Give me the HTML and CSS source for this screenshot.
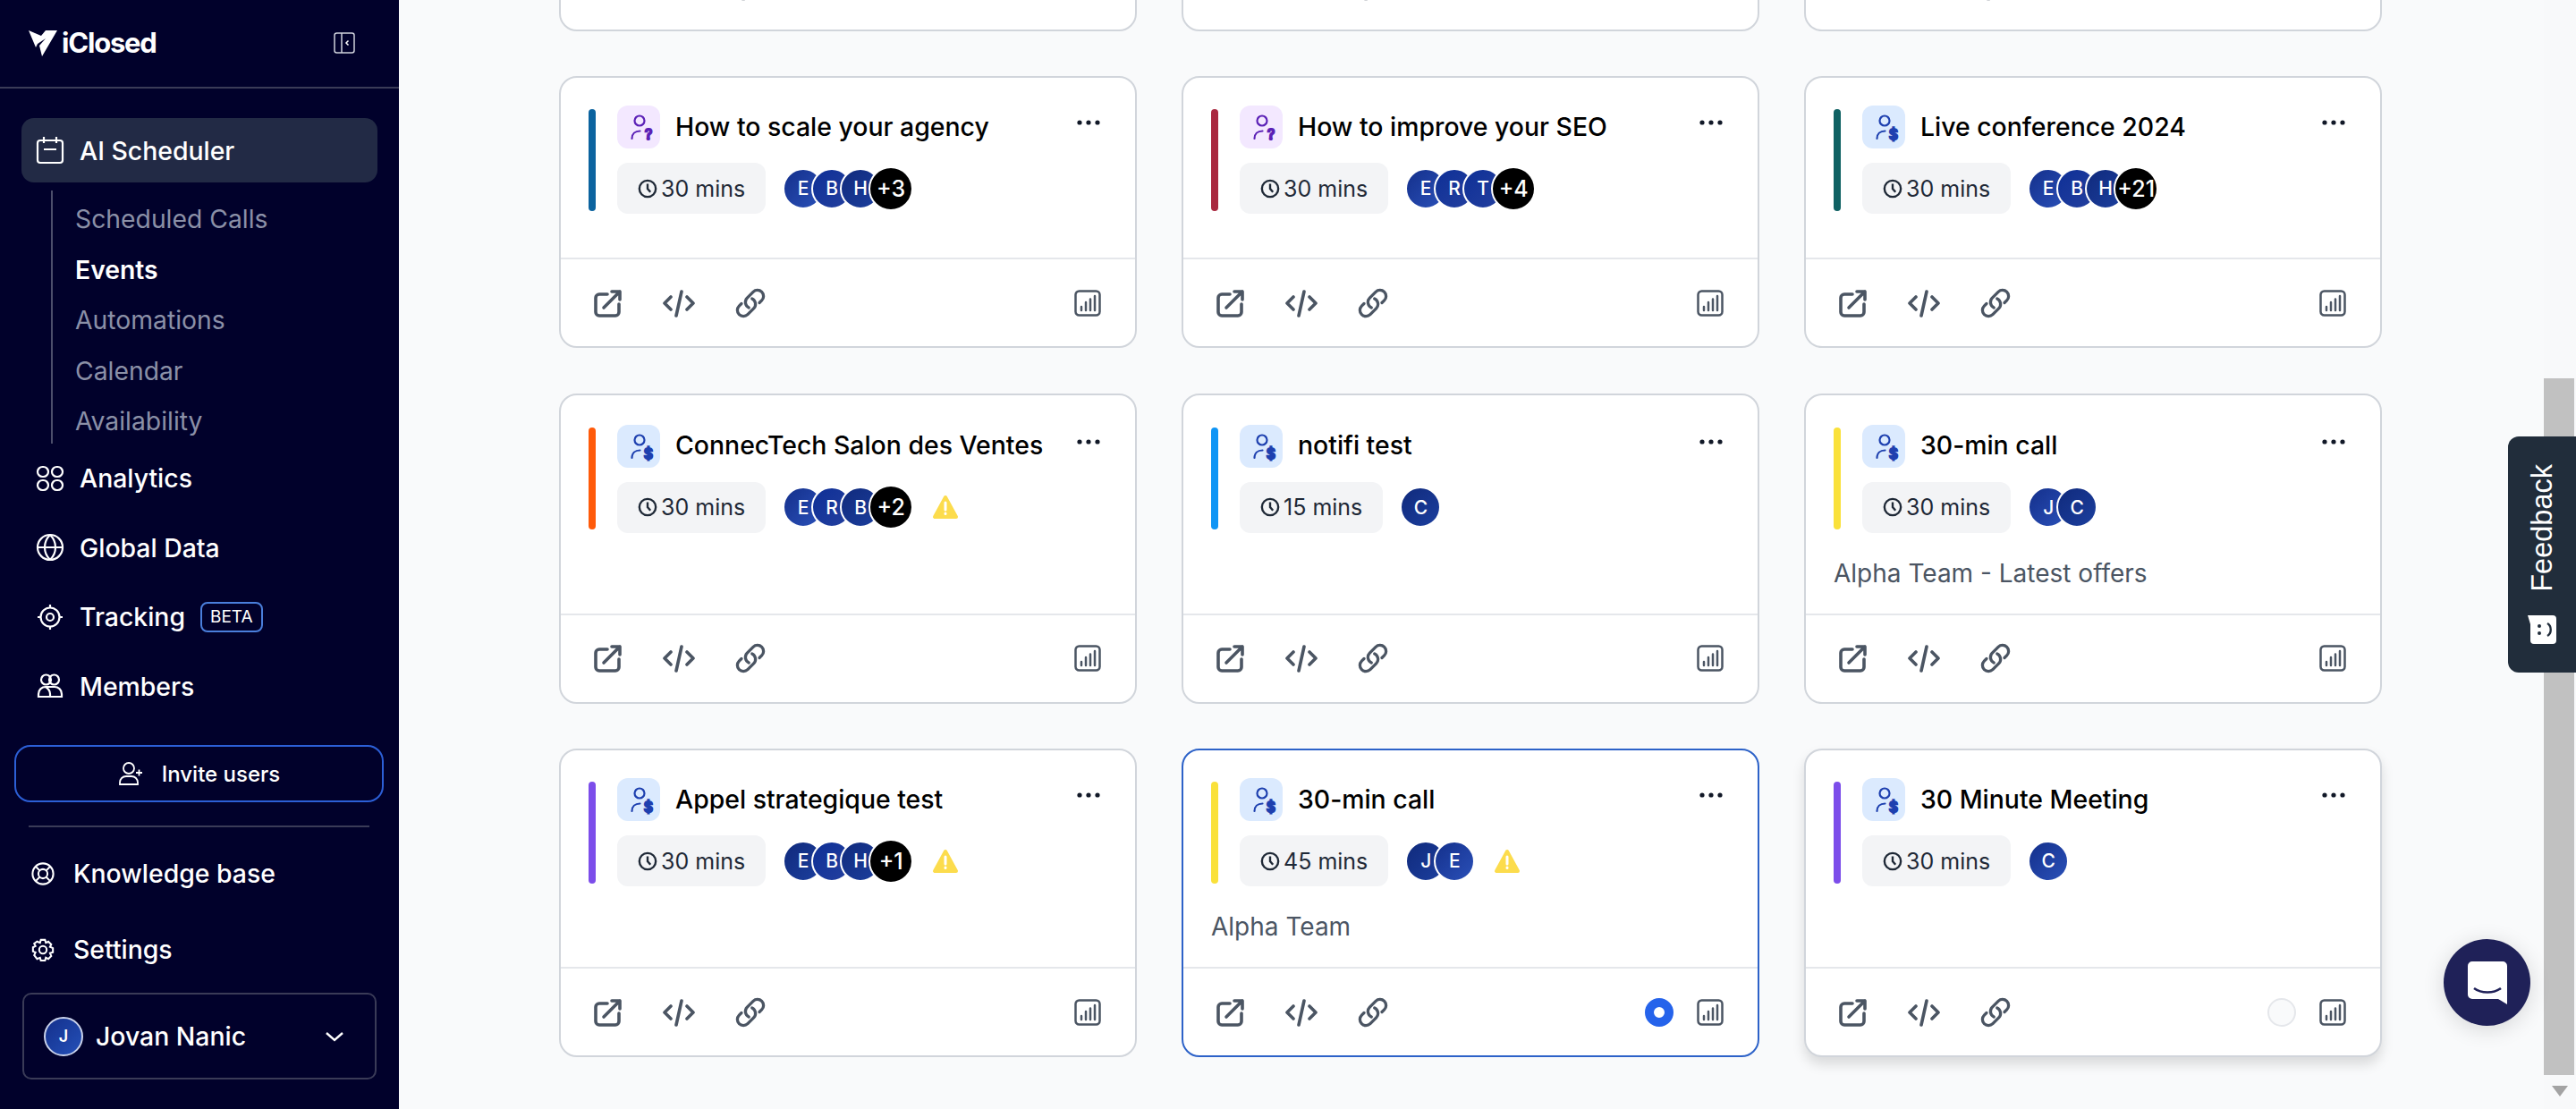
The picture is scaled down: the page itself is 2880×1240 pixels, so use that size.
FILE: index.html
```html
<!DOCTYPE html>
<html lang="en">
<head>
    <meta charset="UTF-8">
    <title>iClosed - Events</title>
    <link rel="stylesheet" href="styles.css">
</head>
<body>
<!-- Icon sprite -->
<svg class="sprite" xmlns="http://www.w3.org/2000/svg">
    <symbol id="i-external" viewBox="0 0 32 32"><path d="M15 6H6a4 4 0 0 0-4 4v16a4 4 0 0 0 4 4h18a4 4 0 0 0 4-4v-9M11 21 29 3M20 3h9v9"/></symbol>
    <symbol id="i-code" viewBox="0 0 38 32"><path d="M10 9 3 16l7 7M28 9l7 7-7 7M22 3l-6 27"/></symbol>
    <symbol id="i-link" viewBox="0 0 24 24"><path d="M13.190 8.688a4.500 4.500 0 0 1 1.242 7.244l-4.500 4.500a4.500 4.500 0 0 1-6.364-6.364l1.757-1.757m13.350-.622 1.757-1.757a4.500 4.500 0 0 0-6.364-6.364l-4.500 4.500a4.500 4.500 0 0 0 1.242 7.244"/></symbol>
    <symbol id="i-chart" viewBox="0 0 30 30"><rect x="1.500" y="1.500" width="27" height="27" rx="4"/><path d="M8 23v-4M13 23v-9M18 23V10.500M23 23V7"/></symbol>
    <symbol id="i-clock" viewBox="0 0 24 24"><circle cx="12" cy="12" r="10"/><path d="M12 6v6l3.500 4"/></symbol>
    <symbol id="i-warn" viewBox="0 0 30 28"><path class="warn-fill" d="M15 3 3 25h24z"/><path class="warn-mark" d="M15 9v8M15 21v.5"/></symbol>
    <symbol id="i-dots" viewBox="0 0 26 6"><circle cx="3" cy="3" r="2.600"/><circle cx="13" cy="3" r="2.600"/><circle cx="23" cy="3" r="2.600"/></symbol>
    <symbol id="i-buyer" viewBox="0 0 48 48"><circle cx="25" cy="17" r="5.500"/><path d="M16.500 37c0-5 3.500-8.500 9-8.500"/><text x="35" y="37.500" text-anchor="middle">$</text></symbol>
    <symbol id="i-lead" viewBox="0 0 48 48"><circle cx="25" cy="17" r="5.500"/><path d="M16.500 37c0-5 3.500-8.500 9-8.500"/><text x="35" y="38" text-anchor="middle">?</text></symbol>
</svg>

<aside class="sidebar">
    <div class="brand">
        <div class="logo">
            <svg width="33" height="30" viewBox="0 0 33 30"><path fill="#fff" d="M0 1 14 7 19 1h13L15 30l-3-12 7-8-9 6-2 4z"/></svg>
            <span>iClosed</span>
        </div>
        <svg class="collapse" width="24" height="24" viewBox="0 0 24 24" fill="none" stroke="#cfd2dc" stroke-width="1.500"><rect x="1" y="1" width="22" height="22" rx="2.500"/><path d="M9 1v22"/><path stroke="#fff" d="M16.500 9.500 14 12l2.500 2.500"/></svg>
    </div>

    <a class="nav-item active">
        <svg viewBox="0 0 32 32"><rect x="2" y="5" width="28" height="25" rx="3"/><path d="M9 1v7M23 1v7M9 15h14"/></svg>
        AI Scheduler
    </a>
    <ul class="subnav">
        <li>Scheduled Calls</li>
        <li class="current">Events</li>
        <li>Automations</li>
        <li>Calendar</li>
        <li>Availability</li>
    </ul>
    <a class="nav-item">
        <svg viewBox="0 0 32 32"><rect x="2" y="3" width="12" height="11" rx="5.500"/><rect x="18" y="3" width="12" height="11" rx="5.500"/><rect x="2" y="18" width="12" height="11" rx="5.500"/><rect x="18" y="18" width="12" height="11" rx="5.500"/></svg>
        Analytics
    </a>
    <a class="nav-item">
        <svg viewBox="0 0 32 32"><circle cx="16" cy="16" r="14"/><path d="M2 16h28M16 2c-8 8-8 20 0 28M16 2c8 8 8 20 0 28"/></svg>
        Global Data
    </a>
    <a class="nav-item">
        <svg viewBox="0 0 32 32"><circle cx="16" cy="16" r="10.500"/><circle cx="16" cy="16" r="4"/><path d="M16 2v3.500M16 26.500V30M2 16h3.500M26.500 16H30"/></svg>
        Tracking
        <span class="badge">BETA</span>
    </a>
    <a class="nav-item">
        <svg viewBox="0 0 32 32"><circle cx="11.500" cy="9" r="5.500"/><circle cx="20.500" cy="9" r="5.500"/><path d="M3 28v-3c0-5 4-8 8-8h10c4 0 8 3 8 8v3zM16 28v-3c0-3-2-6-5-8"/></svg>
        Members
    </a>

    <button class="invite">
        <svg width="28" height="28" viewBox="0 0 28 28" fill="none" stroke="#fff" stroke-width="1.800"><circle cx="12" cy="8" r="6"/><path d="M2 26v-2c0-4 3-7 7-7h6c4 0 7 3 7 7v2zM20 13h7M23.500 9.500v7"/></svg>
        Invite users
    </button>
    <div class="side-divider"></div>

    <a class="nav-item nav-low">
        <svg viewBox="0 0 28 28"><circle cx="14" cy="14" r="12.500"/><circle cx="14" cy="14" r="5.500"/><path d="m5 5 5.500 5.500M23 5l-5.500 5.500M5 23l5.500-5.500M23 23l-5.500-5.500"/></svg>
        Knowledge base
    </a>
    <a class="nav-item nav-low">
        <svg viewBox="0 0 28 28"><circle cx="14" cy="14" r="4.500"/><path d="M11.500 2h5l1 3.500 3-1.500 3.500 3.500-1.500 3 3.500 1.500v5l-3.500 1 1.500 3.500-3.500 3.500-3-1.500-1 3.500h-5l-1-3.500-3.500 1.500L3.500 20.500l1.500-3.500L2 16v-5l3-1.500-1.500-3L7 4l3.500 1.500z"/></svg>
        Settings
    </a>

    <div class="profile">
        <span class="avatar-me">J</span>
        <span class="profile-name">Jovan Nanic</span>
        <svg width="22" height="12" viewBox="0 0 22 12" fill="none" stroke="#fff" stroke-width="2.400"><path d="m2 2 9 8 9-8"/></svg>
    </div>
</aside>

<main class="content">
    <div class="grid">
        <!-- Row cut off by the scroll position -->
        <section class="card">
            <div class="card-foot">
                <svg class="ic ic-external"><use href="#i-external"/></svg>
                <svg class="ic ic-code"><use href="#i-code"/></svg>
                <svg class="ic ic-link"><use href="#i-link"/></svg>
                <div class="foot-right"><svg class="ic ic-chart"><use href="#i-chart"/></svg></div>
            </div>
        </section>
        <section class="card">
            <div class="card-foot">
                <svg class="ic ic-external"><use href="#i-external"/></svg>
                <svg class="ic ic-code"><use href="#i-code"/></svg>
                <svg class="ic ic-link"><use href="#i-link"/></svg>
                <div class="foot-right"><svg class="ic ic-chart"><use href="#i-chart"/></svg></div>
            </div>
        </section>
        <section class="card">
            <div class="card-foot">
                <svg class="ic ic-external"><use href="#i-external"/></svg>
                <svg class="ic ic-code"><use href="#i-code"/></svg>
                <svg class="ic ic-link"><use href="#i-link"/></svg>
                <div class="foot-right"><svg class="ic ic-chart"><use href="#i-chart"/></svg></div>
            </div>
        </section>

        <section class="card">
            <div class="card-body">
                <div class="head">
                    <span class="bar bar-ocean"></span>
                    <div class="head-main">
                        <div class="title-row">
                            <svg class="type type-lead"><use href="#i-lead"/></svg>
                            <h3>How to scale your agency</h3>
                            <svg class="dots"><use href="#i-dots"/></svg>
                        </div>
                        <div class="meta">
                            <span class="chip"><svg class="clock"><use href="#i-clock"/></svg>30 mins</span>
                            <div class="avatars"><span class="av av-a">E</span><span class="av av-b">B</span><span class="av av-c">H</span><span class="av av-more">+3</span></div>
                        </div>
                    </div>
                </div>
            </div>
            <div class="card-foot">
                <svg class="ic ic-external"><use href="#i-external"/></svg>
                <svg class="ic ic-code"><use href="#i-code"/></svg>
                <svg class="ic ic-link"><use href="#i-link"/></svg>
                <div class="foot-right"><svg class="ic ic-chart"><use href="#i-chart"/></svg></div>
            </div>
        </section>
        <section class="card">
            <div class="card-body">
                <div class="head">
                    <span class="bar bar-crimson"></span>
                    <div class="head-main">
                        <div class="title-row">
                            <svg class="type type-lead"><use href="#i-lead"/></svg>
                            <h3>How to improve your SEO</h3>
                            <svg class="dots"><use href="#i-dots"/></svg>
                        </div>
                        <div class="meta">
                            <span class="chip"><svg class="clock"><use href="#i-clock"/></svg>30 mins</span>
                            <div class="avatars"><span class="av av-a">E</span><span class="av av-b">R</span><span class="av av-b">T</span><span class="av av-more">+4</span></div>
                        </div>
                    </div>
                </div>
            </div>
            <div class="card-foot">
                <svg class="ic ic-external"><use href="#i-external"/></svg>
                <svg class="ic ic-code"><use href="#i-code"/></svg>
                <svg class="ic ic-link"><use href="#i-link"/></svg>
                <div class="foot-right"><svg class="ic ic-chart"><use href="#i-chart"/></svg></div>
            </div>
        </section>
        <section class="card">
            <div class="card-body">
                <div class="head">
                    <span class="bar bar-teal"></span>
                    <div class="head-main">
                        <div class="title-row">
                            <svg class="type type-buyer"><use href="#i-buyer"/></svg>
                            <h3>Live conference 2024</h3>
                            <svg class="dots"><use href="#i-dots"/></svg>
                        </div>
                        <div class="meta">
                            <span class="chip"><svg class="clock"><use href="#i-clock"/></svg>30 mins</span>
                            <div class="avatars"><span class="av av-a">E</span><span class="av av-b">B</span><span class="av av-c">H</span><span class="av av-more">+21</span></div>
                        </div>
                    </div>
                </div>
            </div>
            <div class="card-foot">
                <svg class="ic ic-external"><use href="#i-external"/></svg>
                <svg class="ic ic-code"><use href="#i-code"/></svg>
                <svg class="ic ic-link"><use href="#i-link"/></svg>
                <div class="foot-right"><svg class="ic ic-chart"><use href="#i-chart"/></svg></div>
            </div>
        </section>

        <section class="card card-mid">
            <div class="card-body">
                <div class="head">
                    <span class="bar bar-orange"></span>
                    <div class="head-main">
                        <div class="title-row">
                            <svg class="type type-buyer"><use href="#i-buyer"/></svg>
                            <h3>ConnecTech Salon des Ventes</h3>
                            <svg class="dots"><use href="#i-dots"/></svg>
                        </div>
                        <div class="meta">
                            <span class="chip"><svg class="clock"><use href="#i-clock"/></svg>30 mins</span>
                            <div class="avatars"><span class="av av-a">E</span><span class="av av-b">R</span><span class="av av-c">B</span><span class="av av-more">+2</span></div>
                            <svg class="warn"><use href="#i-warn"/></svg>
                        </div>
                    </div>
                </div>
            </div>
            <div class="card-foot">
                <svg class="ic ic-external"><use href="#i-external"/></svg>
                <svg class="ic ic-code"><use href="#i-code"/></svg>
                <svg class="ic ic-link"><use href="#i-link"/></svg>
                <div class="foot-right"><svg class="ic ic-chart"><use href="#i-chart"/></svg></div>
            </div>
        </section>
        <section class="card card-mid">
            <div class="card-body">
                <div class="head">
                    <span class="bar bar-sky"></span>
                    <div class="head-main">
                        <div class="title-row">
                            <svg class="type type-buyer"><use href="#i-buyer"/></svg>
                            <h3>notifi test</h3>
                            <svg class="dots"><use href="#i-dots"/></svg>
                        </div>
                        <div class="meta">
                            <span class="chip"><svg class="clock"><use href="#i-clock"/></svg>15 mins</span>
                            <div class="avatars"><span class="av av-c">C</span></div>
                        </div>
                    </div>
                </div>
            </div>
            <div class="card-foot">
                <svg class="ic ic-external"><use href="#i-external"/></svg>
                <svg class="ic ic-code"><use href="#i-code"/></svg>
                <svg class="ic ic-link"><use href="#i-link"/></svg>
                <div class="foot-right"><svg class="ic ic-chart"><use href="#i-chart"/></svg></div>
            </div>
        </section>
        <section class="card card-mid">
            <div class="card-body">
                <div class="head">
                    <span class="bar bar-yellow"></span>
                    <div class="head-main">
                        <div class="title-row">
                            <svg class="type type-buyer"><use href="#i-buyer"/></svg>
                            <h3>30-min call</h3>
                            <svg class="dots"><use href="#i-dots"/></svg>
                        </div>
                        <div class="meta">
                            <span class="chip"><svg class="clock"><use href="#i-clock"/></svg>30 mins</span>
                            <div class="avatars"><span class="av av-a">J</span><span class="av av-c">C</span></div>
                        </div>
                    </div>
                </div>
                <p class="desc">Alpha Team - Latest offers</p>
            </div>
            <div class="card-foot">
                <svg class="ic ic-external"><use href="#i-external"/></svg>
                <svg class="ic ic-code"><use href="#i-code"/></svg>
                <svg class="ic ic-link"><use href="#i-link"/></svg>
                <div class="foot-right"><svg class="ic ic-chart"><use href="#i-chart"/></svg></div>
            </div>
        </section>

        <section class="card">
            <div class="card-body">
                <div class="head">
                    <span class="bar bar-violet"></span>
                    <div class="head-main">
                        <div class="title-row">
                            <svg class="type type-buyer"><use href="#i-buyer"/></svg>
                            <h3>Appel strategique test</h3>
                            <svg class="dots"><use href="#i-dots"/></svg>
                        </div>
                        <div class="meta">
                            <span class="chip"><svg class="clock"><use href="#i-clock"/></svg>30 mins</span>
                            <div class="avatars"><span class="av av-c">E</span><span class="av av-b">B</span><span class="av av-c">H</span><span class="av av-more">+1</span></div>
                            <svg class="warn"><use href="#i-warn"/></svg>
                        </div>
                    </div>
                </div>
            </div>
            <div class="card-foot">
                <svg class="ic ic-external"><use href="#i-external"/></svg>
                <svg class="ic ic-code"><use href="#i-code"/></svg>
                <svg class="ic ic-link"><use href="#i-link"/></svg>
                <div class="foot-right"><svg class="ic ic-chart"><use href="#i-chart"/></svg></div>
            </div>
        </section>
        <section class="card card-selected">
            <div class="card-body">
                <div class="head">
                    <span class="bar bar-yellow"></span>
                    <div class="head-main">
                        <div class="title-row">
                            <svg class="type type-buyer"><use href="#i-buyer"/></svg>
                            <h3>30-min call</h3>
                            <svg class="dots"><use href="#i-dots"/></svg>
                        </div>
                        <div class="meta">
                            <span class="chip"><svg class="clock"><use href="#i-clock"/></svg>45 mins</span>
                            <div class="avatars"><span class="av av-c">J</span><span class="av av-a">E</span></div>
                            <svg class="warn"><use href="#i-warn"/></svg>
                        </div>
                    </div>
                </div>
                <p class="desc">Alpha Team</p>
            </div>
            <div class="card-foot">
                <svg class="ic ic-external"><use href="#i-external"/></svg>
                <svg class="ic ic-code"><use href="#i-code"/></svg>
                <svg class="ic ic-link"><use href="#i-link"/></svg>
                <div class="foot-right">
                    <span class="radio radio-on"></span>
                    <svg class="ic ic-chart"><use href="#i-chart"/></svg>
                </div>
            </div>
        </section>
        <section class="card card-hover">
            <div class="card-body">
                <div class="head">
                    <span class="bar bar-violet"></span>
                    <div class="head-main">
                        <div class="title-row">
                            <svg class="type type-buyer"><use href="#i-buyer"/></svg>
                            <h3>30 Minute Meeting</h3>
                            <svg class="dots"><use href="#i-dots"/></svg>
                        </div>
                        <div class="meta">
                            <span class="chip"><svg class="clock"><use href="#i-clock"/></svg>30 mins</span>
                            <div class="avatars"><span class="av av-a">C</span></div>
                        </div>
                    </div>
                </div>
            </div>
            <div class="card-foot">
                <svg class="ic ic-external"><use href="#i-external"/></svg>
                <svg class="ic ic-code"><use href="#i-code"/></svg>
                <svg class="ic ic-link"><use href="#i-link"/></svg>
                <div class="foot-right">
                    <span class="radio"></span>
                    <svg class="ic ic-chart"><use href="#i-chart"/></svg>
                </div>
            </div>
        </section>
    </div>
</main>

<div class="scrollbar">
    <div class="scroll-thumb"></div>
    <div class="scroll-down"></div>
</div>

<!-- Floating widgets -->
<div class="feedback">
    <span class="feedback-text">Feedback</span>
    <svg width="33" height="32" viewBox="0 0 33 32"><path fill="#fff" d="M0 0h28a4 4 0 0 1 4 4v24a4 4 0 0 1-4 4H7a4 4 0 0 1-4-4V10z"/><circle cx="13" cy="12" r="2" fill="#212d3b"/><circle cx="13" cy="20" r="2" fill="#212d3b"/><path d="M22 9c5 3 5 11 0 14" fill="none" stroke="#212d3b" stroke-width="2.400"/></svg>
</div>
<div class="chat">
    <svg width="44" height="48" viewBox="0 0 44 48"><path fill="#fff" d="M5 0h34a5 5 0 0 1 5 5v43l-10-6H5a5 5 0 0 1-5-5V5a5 5 0 0 1 5-5z"/><path d="M7 30c8 6 22 6 30 0" fill="none" stroke="#1f2158" stroke-width="2.500"/></svg>
</div>
</body>
</html>
```
FILE: styles.css
```css
* {
    box-sizing: border-box;
}

body {
    margin: 0;
    height: 1240px;
    display: flex;
    overflow: hidden;
    background-color: #f9fafb;
    font-family: Inter, "Liberation Sans", sans-serif;
    color: #000;
}

.sprite {
    display: none;
}

/* Sidebar */
.sidebar {
    width: 446px;
    flex-shrink: 0;
    height: 100%;
    display: flex;
    flex-direction: column;
    background-color: #01012b;
    color: #fff;
}

.brand {
    height: 99px;
    flex-shrink: 0;
    display: flex;
    align-items: center;
    justify-content: space-between;
    padding: 0 49px 2px 32px;
    border-bottom: 2px solid #3a3b57;
}

.logo {
    display: flex;
    align-items: center;
    gap: 4px;
    font-size: 31px;
    font-weight: 700;
    letter-spacing: -1.200px;
}

.nav-item {
    height: 77.500px;
    flex-shrink: 0;
    margin: 0 24px;
    padding-left: 16px;
    display: flex;
    align-items: center;
    gap: 17px;
    font-size: 28.400px;
    font-weight: 500;
}

.nav-item svg {
    width: 32px;
    height: 32px;
    fill: none;
    stroke: #fff;
    stroke-width: 2.200;
}

.nav-item.active {
    height: 72px;
    margin-top: 33px;
    background-color: #222a45;
    border-radius: 14px;
}

.nav-low {
    height: 85px;
    margin: 0;
    padding-left: 35px;
    gap: 21px;
}

.nav-low svg {
    width: 26px;
    height: 26px;
}

.badge {
    padding: 0 9px;
    height: 34px;
    display: flex;
    align-items: center;
    border: 2px solid #4a7fdc;
    border-radius: 8px;
    font-size: 19px;
    font-weight: 400;
}

.subnav {
    list-style: none;
    height: 283px;
    flex-shrink: 0;
    margin: 9px 0 0 57px;
    padding: 4px 0 0 25px;
    border-left: 2px solid #4c4e6b;
    color: #8b90a7;
    font-size: 28.300px;
}

.subnav li {
    height: 56.500px;
    display: flex;
    align-items: center;
}

.subnav .current {
    color: #fff;
    font-weight: 600;
}

.invite {
    height: 64px;
    flex-shrink: 0;
    margin: 27px 17px 0 16px;
    display: flex;
    align-items: center;
    justify-content: center;
    gap: 21px;
    background: none;
    border: 2px solid #2c5fd6;
    border-radius: 18px;
    color: #fff;
    font-family: inherit;
    font-size: 24px;
    font-weight: 500;
}

.side-divider {
    height: 2px;
    flex-shrink: 0;
    margin: 26px 33px 9px 32px;
    background-color: #3a3b57;
}

.profile {
    height: 97px;
    flex-shrink: 0;
    margin: 6px 25px 0;
    padding: 0 34px 0 22px;
    display: flex;
    align-items: center;
    border: 2px solid #3a3b57;
    border-radius: 10px;
    font-size: 28.400px;
    font-weight: 500;
}

.avatar-me {
    width: 44px;
    height: 44px;
    display: flex;
    align-items: center;
    justify-content: center;
    background: linear-gradient(135deg, #14308c, #2450b8);
    border: 2px solid #c9d2ea;
    border-radius: 50%;
    font-size: 18px;
    font-weight: 600;
}

.profile-name {
    flex: 1;
    margin-left: 14px;
}

/* Event cards */
.content {
    flex: 1;
    min-width: 0;
    display: flex;
    flex-direction: column;
    justify-content: flex-end;
    padding: 0 0 58px 179px;
}

.grid {
    display: grid;
    grid-template-columns: repeat(3, 646px);
    column-gap: 50px;
    row-gap: 50.500px;
}

.card {
    display: flex;
    flex-direction: column;
    background-color: #fff;
    border: 2px solid #d1d5db;
    border-radius: 20px;
}

.card-selected {
    border-color: #2d62c8;
}

.card-hover {
    box-shadow: 0 8px 14px rgba(0, 0, 0, 0.13);
}

.card-body {
    flex: 1;
    min-height: 201px;
    padding: 31px 31px 26px;
}

.card-mid .card-body {
    padding-top: 33px;
}

.head {
    display: flex;
    align-items: center;
    gap: 24px;
}

.bar {
    width: 8px;
    height: 114px;
    flex-shrink: 0;
    border-radius: 4px;
}

.bar-ocean { background-color: #0b639f; }
.bar-crimson { background-color: #a9283f; }
.bar-teal { background-color: #0f6163; }
.bar-orange { background-color: #ff5a0a; }
.bar-sky { background-color: #0f95f5; }
.bar-yellow { background-color: #fae13a; }
.bar-violet { background-color: #7c4dea; }

.head-main {
    flex: 1;
    min-width: 0;
}

.title-row {
    display: flex;
    align-items: center;
    gap: 17px;
    height: 48px;
}

h3 {
    flex: 1;
    margin: 0;
    padding-bottom: 2px;
    font-size: 28.400px;
    font-weight: 500;
}

.type {
    width: 48px;
    height: 48px;
    flex-shrink: 0;
    border-radius: 12px;
    fill: none;
    stroke-width: 2.200;
    stroke-linecap: round;
}

.type text {
    stroke: none;
    font-family: Inter, sans-serif;
    font-size: 13px;
    font-weight: 600;
}

.type-lead {
    background-color: #f3e8ff;
    stroke: #5b21b6;
}

.type-lead text {
    fill: #5b21b6;
}

.type-buyer {
    background-color: #dbeafe;
    stroke: #1e40af;
}

.type-buyer text {
    fill: #1e40af;
}

.dots {
    width: 26px;
    height: 6px;
    margin: -10px 8px 0 0;
    fill: #111827;
}

.meta {
    display: flex;
    align-items: center;
    margin-top: 16px;
}

.chip {
    height: 57px;
    display: flex;
    align-items: center;
    gap: 4px;
    padding: 0 23px;
    background-color: #f3f4f6;
    border-radius: 12px;
    color: #1f2937;
    font-size: 25px;
}

.clock {
    width: 22px;
    height: 22px;
    fill: none;
    stroke: #1f2937;
    stroke-width: 2.600;
}

.avatars {
    display: flex;
    align-items: center;
    margin-left: 19px;
}

.av {
    width: 46px;
    height: 46px;
    display: flex;
    align-items: center;
    justify-content: center;
    margin-right: -14px;
    border: 2px solid #fff;
    border-radius: 50%;
    color: #fff;
    font-size: 21px;
    font-weight: 500;
}

.av:last-child {
    margin-right: 0;
}

.av-a { background: linear-gradient(135deg, #14308c, #2a50b8); }
.av-b { background: linear-gradient(135deg, #0e2f96, #24409f); }
.av-c { background: linear-gradient(135deg, #102a7c, #1c3f9e); }

.av-more {
    width: 50px;
    height: 50px;
    background-color: #000;
    font-size: 25px;
}

.warn {
    width: 30px;
    height: 28px;
    margin-left: 21px;
}

.warn-fill {
    fill: #fcdc4d;
    stroke: #fcdc4d;
    stroke-width: 4;
    stroke-linejoin: round;
}

.warn-mark {
    fill: none;
    stroke: #fff;
    stroke-width: 3;
    stroke-linecap: round;
}

.desc {
    margin: 26px 0 0;
    line-height: 38px;
    font-size: 28px;
    color: #4b5563;
}

.card-foot {
    height: 99px;
    flex-shrink: 0;
    display: flex;
    align-items: center;
    gap: 44px;
    padding: 0 38px 0 37px;
    border-top: 2px solid #e5e7eb;
}

.ic {
    height: 32px;
    fill: none;
    stroke: #4b5563;
    stroke-width: 3.600;
    stroke-linecap: round;
    stroke-linejoin: round;
}

.ic-external { width: 32px; }
.ic-code { width: 38px; }
.ic-link { width: 36px; height: 36px; margin-left: -1px; margin-right: -1px; stroke-width: 2.200; }
.ic-chart { width: 30px; height: 30px; stroke-width: 2.500; }

.foot-right {
    margin-left: auto;
    display: flex;
    align-items: center;
    gap: 26px;
}

.radio {
    width: 32px;
    height: 32px;
    background-color: #f9fafb;
    border: 2px solid #e5e7eb;
    border-radius: 50%;
}

.radio-on {
    background-color: #fff;
    border: 10px solid #2563eb;
}

/* Browser scrollbar */
.scrollbar {
    width: 36px;
    flex-shrink: 0;
    display: flex;
    flex-direction: column;
    align-items: flex-start;
    background-color: #f8f9fa;
    padding-top: 423px;
}

.scroll-thumb {
    width: 34px;
    height: 779px;
    background-color: #c1c1c1;
}

.scroll-down {
    margin: 12px 0 0 9px;
    border-left: 9px solid transparent;
    border-right: 9px solid transparent;
    border-top: 12px solid #a3a3a3;
}

/* Floating widgets */
.feedback {
    position: absolute;
    top: 488px;
    right: 0;
    width: 76px;
    height: 264px;
    display: flex;
    flex-direction: column;
    align-items: center;
    justify-content: flex-end;
    gap: 26px;
    padding: 0 0 32px;
    background-color: #212d3b;
    border-radius: 12px 0 0 12px;
    color: #fff;
}

.feedback-text {
    writing-mode: vertical-rl;
    transform: rotate(180deg);
    font-family: "Liberation Sans", sans-serif;
    font-size: 32.500px;
}

.chat {
    position: absolute;
    top: 1050px;
    left: 2732px;
    width: 97px;
    height: 97px;
    display: flex;
    align-items: center;
    justify-content: center;
    background-color: #1f2158;
    border-radius: 50%;
    box-shadow: 0 4px 24px rgba(0, 0, 0, 0.14);
}
```
